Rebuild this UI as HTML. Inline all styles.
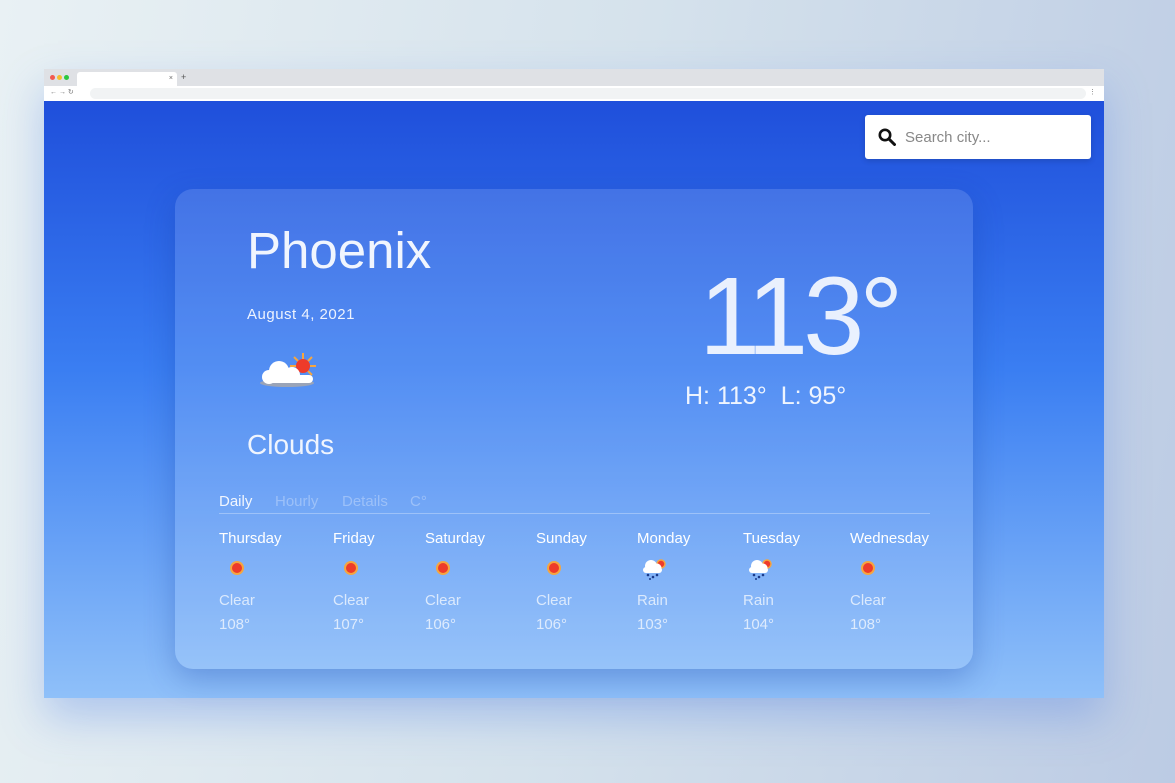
<!DOCTYPE html>
<html><head><meta charset="utf-8"><style>
*{margin:0;padding:0;box-sizing:border-box}
body{width:1175px;height:783px;overflow:hidden;background:linear-gradient(100deg,#e9f1f4 0%,#d5e2ec 50%,#bccbe4 100%);font-family:"Liberation Sans",sans-serif;position:relative}
.win{position:absolute;left:44px;top:69px;width:1060px;height:629px;box-shadow:0 20px 40px rgba(80,130,230,.35)}
.tabs{height:17px;background:#dfe1e5;position:relative}
.dot{position:absolute;top:6px;width:5px;height:5px;border-radius:50%}
.tab{position:absolute;left:33px;top:3px;width:100px;height:14px;background:#fff;border-radius:3px 3px 0 0;font-size:7px;color:#666;text-align:right;padding-right:4px;line-height:14px}
.addr{height:15px;background:#fff;position:relative;font-size:7px;color:#777}
.url{position:absolute;left:46px;top:2px;width:996px;height:11px;background:#f1f3f4;border-radius:6px}
.content{position:absolute;top:32px;left:0;width:1060px;height:597px;background:linear-gradient(180deg,#1f4fdb 0%,#3a7ef2 45%,#8fc0f9 100%);color:#fff}
.search{position:absolute;left:821px;top:14px;width:226px;height:44px;background:#fff;border-radius:3px;box-shadow:0 2px 6px rgba(0,0,0,.15)}
.search span{position:absolute;left:40px;top:14px;font-size:15px;color:#888}
.card{position:absolute;left:131px;top:88px;width:798px;height:480px;border-radius:18px;background:rgba(255,255,255,.13);box-shadow:0 10px 30px rgba(20,60,160,.3)}
.a{position:absolute;white-space:nowrap;font-weight:300}
</style></head><body>
<div class="win">
<div class="tabs"><div class="dot" style="left:6px;background:#f25a50"></div><div class="dot" style="left:13px;background:#f5be2f"></div><div class="dot" style="left:20px;background:#2cc840"></div><div class="tab">×</div><span style="position:absolute;left:137px;top:3px;font-size:9px;color:#555">+</span></div>
<div class="addr"><span style="position:absolute;left:6px;top:2px">← → ↻</span><div class="url"></div><span style="position:absolute;right:8px;top:2px">⋮</span></div>
<div class="content">
<div class="search"><svg style="position:absolute;left:13px;top:13px" width="18" height="18" viewBox="0 0 18 18"><circle cx="7" cy="7" r="5.2" fill="none" stroke="#111" stroke-width="2.6"/><path d="M11 11L16.5 16.5" stroke="#111" stroke-width="3" stroke-linecap="round"/></svg><span>Search city...</span></div>
<div class="card">
<div class="a" style="left:72px;top:32px;font-size:51px;color:rgba(255,255,255,.92)">Phoenix</div>
<div class="a" style="left:72px;top:117px;font-size:15px;letter-spacing:.5px;color:rgba(255,255,255,.9)">August 4, 2021</div>
<svg style="position:absolute;left:82px;top:162px" width="62" height="38" viewBox="0 0 62 38">
<g stroke="#f5a640" stroke-width="2"><path d="M46 2v6M46 26v5M33 15h6M53 15h6M37 6l4 4M51 20l4 4M55 6l-4 4M41 20l-4 4"/></g>
<circle cx="46" cy="15" r="7" fill="#ee3b2a"/>
<ellipse cx="30" cy="32" rx="27" ry="4" fill="#9aa4b8"/>
<circle cx="22" cy="20" r="10" fill="#fff"/><circle cx="35" cy="24" r="8" fill="#fff"/><circle cx="12" cy="26" r="7" fill="#fff"/><rect x="6" y="24" width="50" height="8" rx="4" fill="#fff"/>
</svg>
<div class="a" style="left:72px;top:240px;font-size:28px;color:rgba(255,255,255,.9)">Clouds</div>
<div class="a" style="left:524px;top:64px;font-size:110px;letter-spacing:-5px;color:rgba(255,255,255,.88)">113°</div>
<div class="a" style="left:510px;top:193px;font-size:25px;color:rgba(255,255,255,.9)">H: 113°&nbsp;&nbsp;L: 95°</div>
<div class="a" style="left:44px;top:304px;font-size:15px;color:rgba(255,255,255,.9)">Daily</div>
<div class="a" style="left:100px;top:304px;font-size:15px;color:rgba(255,255,255,.3)">Hourly</div>
<div class="a" style="left:167px;top:304px;font-size:15px;color:rgba(255,255,255,.3)">Details</div>
<div class="a" style="left:235px;top:304px;font-size:15px;color:rgba(255,255,255,.3)">C°</div>
<div style="position:absolute;left:44px;top:324px;width:711px;height:1px;background:rgba(255,255,255,.3)"></div>
</div>
</div></div>
<div id="days"></div>
<script>
var d=[["Thursday",219,"Clear","108°"],["Friday",333,"Clear","107°"],["Saturday",425,"Clear","106°"],["Sunday",536,"Clear","106°"],["Monday",637,"Rain","103°"],["Tuesday",743,"Rain","104°"],["Wednesday",850,"Clear","108°"]];
var h="";d.forEach(function(x){var ic=x[2]=="Clear"?'<div style="position:absolute;left:'+(x[1]+13)+'px;top:563px;width:10px;height:10px;border-radius:50%;background:#ee3b2a;box-shadow:0 0 0 2px #f5a640"></div>':'<svg style="position:absolute;left:'+(x[1]+4)+'px;top:558px" width="26" height="22" viewBox="0 0 26 22"><circle cx="20" cy="6" r="4" fill="#ee3b2a" stroke="#f5a640" stroke-width="1.5"/><circle cx="10" cy="8" r="6" fill="#fff"/><circle cx="16" cy="10" r="4.5" fill="#fff"/><rect x="2" y="9" width="19" height="6" rx="3" fill="#fff"/><g fill="#1a3a8a"><circle cx="7" cy="17" r="1.3"/><circle cx="12" cy="19" r="1.3"/><circle cx="16" cy="17" r="1.3"/><circle cx="9" cy="21" r="1"/></g></svg>';
h+='<div style="position:absolute;left:'+x[1]+'px;top:530px;font-size:15px;color:#fff;font-family:Liberation Sans,sans-serif">'+x[0]+'</div>'+ic+'<div style="position:absolute;left:'+x[1]+'px;top:592px;font-size:15px;color:rgba(255,255,255,.7);font-family:Liberation Sans,sans-serif">'+x[2]+'</div><div style="position:absolute;left:'+x[1]+'px;top:616px;font-size:15px;color:rgba(255,255,255,.7);font-family:Liberation Sans,sans-serif">'+x[3]+'</div>';});
document.getElementById("days").innerHTML=h;
</script>
</body></html>
